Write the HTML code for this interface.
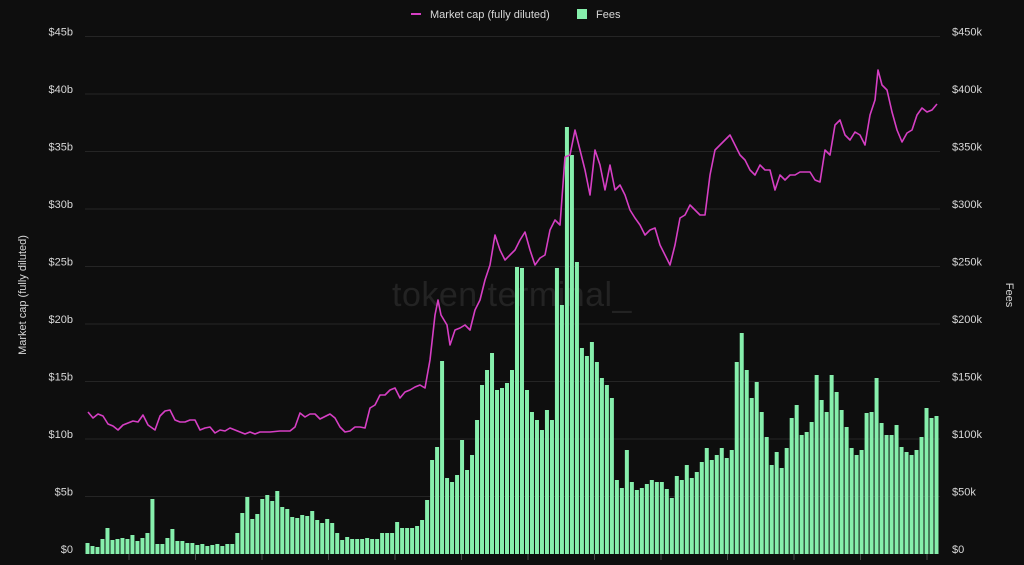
<!DOCTYPE html>
<html><head><meta charset="utf-8"><style>
html,body{margin:0;padding:0;background:#0e0e0e;width:1024px;height:565px;overflow:hidden}
svg{display:block}
text{font-family:"Liberation Sans",sans-serif}
</style></head><body>
<svg id="s" width="1024" height="565" viewBox="0 0 1024 565" xmlns="http://www.w3.org/2000/svg">
<rect width="1024" height="565" fill="#0e0e0e"/>
<g id="grid" stroke="#252525" stroke-width="1"></g>
<text x="512" y="306" text-anchor="middle" font-size="34" fill="#232323" letter-spacing="0.5">token terminal_</text>
<g id="bars" fill="#86efac"></g>
<polyline id="line" fill="none" stroke="#d63fc4" stroke-width="1.6" stroke-linejoin="round"/>
<g id="ticks" stroke="#444" stroke-width="1"></g>
<g id="lab" font-size="11" fill="#d8d8d8"></g>
<line x1="411" y1="14" x2="421" y2="14" stroke="#d63fc4" stroke-width="2"/>
<text x="430" y="18" font-size="11" fill="#d8d8d8">Market cap (fully diluted)</text>
<rect x="577" y="9" width="10" height="10" fill="#86efac"/>
<text x="596" y="18" font-size="11" fill="#d8d8d8">Fees</text>
<text transform="translate(26,295) rotate(-90)" text-anchor="middle" font-size="11" fill="#d8d8d8">Market cap (fully diluted)</text>
<text transform="translate(1006,295) rotate(90)" text-anchor="middle" font-size="11" fill="#d8d8d8">Fees</text>
</svg>
<script>
var ns="http://www.w3.org/2000/svg";
function el(t,a,p){var e=document.createElementNS(ns,t);for(var k in a)e.setAttribute(k,a[k]);document.getElementById(p).appendChild(e);return e;}
var base=554,step=57.5;
var L=["$0","$5b","$10b","$15b","$20b","$25b","$30b","$35b","$40b","$45b"];
var R=["$0","$50k","$100k","$150k","$200k","$250k","$300k","$350k","$400k","$450k"];
for(var i=0;i<10;i++){var y=base-i*step;
 if(i>0)el("line",{x1:85,x2:940,y1:y,y2:y},"grid");
 var t=el("text",{x:73,y:y-1,"text-anchor":"end"},"lab");t.textContent=L[i];
 var r=el("text",{x:952,y:y-1},"lab");r.textContent=R[i];}
var tops=[543,546,547,539,528,540,539,538,539,535,541,538,533,499,544,544,538,529,541,541,543,543,545,544,546,545,544,546,544,544,533,513,497,519,514,499,495,501,491,507,509,517,518,515,516,511,520,523,519,523,533,540,537,539,539,539,538,539,539,533,533,533,522,528,528,528,526,520,500,460,447,361,478,482,475,440,470,455,420,385,370,353,390,388,383,370,267,268,390,412,420,430,410,420,268,305,127,155,262,348,356,342,362,378,385,398,480,488,450,482,490,488,484,480,482,482,489,498,476,480,465,478,472,462,448,460,455,448,458,450,362,333,370,398,382,412,437,465,452,468,448,418,405,435,432,422,375,400,412,375,392,410,427,448,455,450,413,412,378,423,435,435,425,447,452,455,450,437,408,418,416];
var n=tops.length,x0=85,w=(939-85)/n;
for(var i=0;i<n;i++){el("rect",{x:(x0+i*w+0.5).toFixed(2),y:tops[i],width:(w-1).toFixed(2),height:base-tops[i]},"bars");}
var pts="88,412 93,418 98,414 103,416 108,424 113,426 118,430 123,425 128,423 133,421 138,422 143,415 148,425 155,430 160,416 165,411 170,410 175,420 180,422 185,422 190,420 195,420 200,430 205,428 210,427 215,433 220,430 225,431 230,428 240,432 245,434 250,432 255,434 260,432 270,432 280,431 290,431 295,427 300,413 305,417 310,414 315,414 320,419 330,414 335,418 340,427 345,432 350,431 355,427 360,427 365,428 370,408 375,405 380,395 385,395 390,390 395,388 400,398 405,392 410,390 415,387 420,385 425,388 430,360 435,315 438,300 441,315 444,320 447,325 450,345 455,330 460,328 465,325 470,330 475,310 480,300 485,280 490,265 495,235 500,250 505,260 510,255 515,250 520,240 525,232 530,250 535,265 540,258 545,255 550,230 555,220 560,225 565,157 570,155 575,130 580,150 585,170 590,195 595,150 600,165 605,190 610,165 615,190 620,185 625,195 630,210 635,218 640,225 645,235 650,230 655,228 660,245 665,255 670,265 675,245 680,218 685,215 690,205 695,210 700,215 705,215 710,175 715,150 720,145 725,140 730,135 735,145 740,155 745,160 750,170 755,175 760,165 765,170 770,170 775,190 780,175 785,180 790,175 795,175 800,172 810,172 815,180 820,182 825,150 830,155 835,125 840,120 845,135 850,140 855,132 860,135 865,145 870,115 875,100 878,70 882,85 887,90 892,112 897,130 902,142 907,133 912,130 917,115 922,108 927,112 932,110 937,104";
document.getElementById("line").setAttribute("points",pts);
for(var i=0;i<13;i++){var x=129+i*66.5;el("line",{x1:x,x2:x,y1:base,y2:base+6},"ticks");}
</script>
</body></html>
